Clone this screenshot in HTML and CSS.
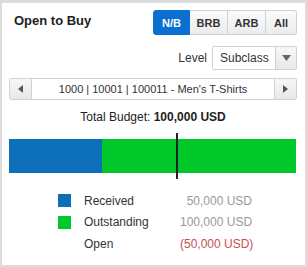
FILE: index.html
```html
<!DOCTYPE HTML>
<html lang="en">
<head>
    <title>Open to Buy</title>
    <link rel="stylesheet" href="styles.css">
</head>
<body>

<div class="otb-panel">
    <div class="otb-header">
        <h1 class="otb-title">Open to Buy</h1>
        <div class="seg-group">
            <button class="seg-btn active">N/B</button>
            <button class="seg-btn">BRB</button>
            <button class="seg-btn">ARB</button>
            <button class="seg-btn">All</button>
        </div>
    </div>

    <div class="level-row">
        <span class="level-label">Level</span>
        <div class="level-select">
            <span class="level-value">Subclass</span>
            <span class="level-arrow">
                <svg width="9" height="6" viewBox="0 0 9 6"><path d="M0 0H9L4.5 6Z" fill="#666"/></svg>
            </span>
        </div>
    </div>

    <div class="nav-row">
        <span class="nav-btn">
            <svg width="5" height="8" viewBox="0 0 5 8"><path d="M5 0V8L0 4Z" fill="#555"/></svg>
        </span>
        <span class="nav-text">1000 | 10001 | 100011 - Men's T-Shirts</span>
        <span class="nav-btn">
            <svg width="5" height="8" viewBox="0 0 5 8"><path d="M0 0V8L5 4Z" fill="#555"/></svg>
        </span>
    </div>

    <p class="total-budget">Total Budget: <b>100,000 USD</b></p>

    <div class="budget-bar">
        <div class="bar-received" style="width: 32.4%"></div>
        <div class="bar-outstanding"></div>
        <div class="bar-marker" style="left: 58.2%"></div>
    </div>

    <div class="legend">
        <span class="swatch blue"></span>
        <span class="legend-label">Received</span>
        <span class="legend-value">50,000 USD</span>

        <span class="swatch green"></span>
        <span class="legend-label">Outstanding</span>
        <span class="legend-value">100,000 USD</span>

        <span class="swatch"></span>
        <span class="legend-label">Open</span>
        <span class="legend-value negative">(50,000 USD)</span>
    </div>
</div>

</body>
</html>
```

FILE: styles.css
```css
:root {
    --blue: #0d6fb8;
    --green: #00c82a;
    --border: #cfd3d6;
    --text-color: #333;
}

body {
    margin: 0;
    font-family: 'Liberation Sans', Arial, sans-serif;
    color: var(--text-color);
}

.otb-panel {
    width: 307px;
    height: 267px;
    box-sizing: border-box;
    border: 2px solid #dcdcdc;
    border-top-width: 3px;
    padding: 7px 8px 0 7px;
    background: white;
}

.otb-header {
    display: flex;
    justify-content: space-between;
    align-items: center;
}

.otb-title {
    margin: 0 0 4px 5px;
    font-size: 13px;
    font-weight: bold;
    color: #222;
}

.seg-group {
    display: flex;
    height: 25px;
}

.seg-btn {
    font-family: inherit;
    font-size: 11px;
    font-weight: bold;
    color: #333;
    width: 38px;
    padding: 0;
    border: 1px solid var(--border);
    border-left: none;
    background: linear-gradient(#fbfbfb, #eaecee);
}

.seg-btn:first-child {
    border-left: 1px solid var(--border);
    border-radius: 3px 0 0 3px;
    width: 37px;
}

.seg-btn:last-child {
    border-radius: 0 3px 3px 0;
    width: 31px;
}

.seg-btn.active {
    background: #0a6fcf;
    border-color: #0a6fcf;
    color: white;
}

.level-row {
    display: flex;
    justify-content: flex-end;
    align-items: center;
    margin-top: 11px;
}

.level-label {
    font-size: 12px;
    margin-right: 5px;
}

.level-select {
    display: flex;
    width: 85px;
    height: 24px;
    box-sizing: border-box;
    border: 1px solid var(--border);
    border-radius: 2px;
}

.level-value {
    flex: 1;
    font-size: 12px;
    line-height: 22px;
    padding-left: 7px;
}

.level-arrow {
    width: 20px;
    display: flex;
    align-items: center;
    justify-content: center;
    border-left: 1px solid var(--border);
    background: linear-gradient(#f7f7f7, #e6e8ea);
}

.nav-row {
    display: flex;
    height: 22px;
    margin-top: 8px;
    box-sizing: border-box;
    border: 1px solid var(--border);
    border-radius: 2px;
}

.nav-btn {
    width: 21px;
    display: flex;
    align-items: center;
    justify-content: center;
    background: linear-gradient(#f7f7f7, #e6e8ea);
}

.nav-btn:first-child {
    border-right: 1px solid var(--border);
}

.nav-btn:last-child {
    border-left: 1px solid var(--border);
}

.nav-text {
    flex: 1;
    text-align: center;
    font-size: 11px;
    line-height: 20px;
}

.total-budget {
    margin: 10px 0 0;
    text-align: center;
    font-size: 12px;
    color: #222;
}

.budget-bar {
    position: relative;
    display: flex;
    height: 34px;
    margin: 15px 1px 0 0;
}

.bar-received {
    background: var(--blue);
}

.bar-outstanding {
    flex: 1;
    background: var(--green);
}

.bar-marker {
    position: absolute;
    top: -6px;
    width: 2px;
    height: 46px;
    background: #222;
}

.legend {
    display: grid;
    grid-template-columns: 13px 83px 72px;
    grid-auto-rows: 21.5px;
    column-gap: 13px;
    align-items: center;
    margin: 17px 0 0 49px;
    font-size: 12px;
}

.swatch {
    width: 13px;
    height: 13px;
}

.swatch.blue {
    background: var(--blue);
}

.swatch.green {
    background: var(--green);
}

.legend-value {
    text-align: right;
    white-space: nowrap;
    color: #999;
}

.legend-value.negative {
    color: #c85050;
}
```
